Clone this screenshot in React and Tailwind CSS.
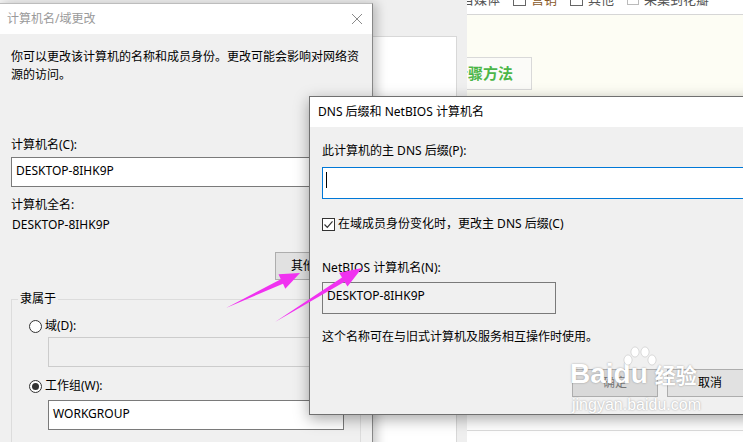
import React from 'react';

const ui = "font-['Noto_Sans','Noto_Sans_CJK_SC',sans-serif] text-[12px] leading-[18px] text-black";

function Radio({ checked, label }) {
  return (
    <div className="flex items-center h-[18px]">
      <span className="w-[13px] h-[13px] rounded-full border border-[#333] bg-white flex items-center justify-center">
        {checked && <span className="w-[7px] h-[7px] rounded-full bg-[#333]" />}
      </span>
      <span className="ml-[3px]">{label}</span>
    </div>
  );
}

function PageBehind() {
  // the web page that sits behind both dialogs
  return (
    <div className="absolute left-[467px] top-0 right-0 bottom-0 bg-white">
      <div className="h-[15px] border-b border-[#d6d6d6] overflow-hidden">
        <div className="-mt-[9px] -ml-[6px] flex items-center gap-[13px] text-[13px] leading-[16px] text-[#555] font-['Noto_Sans_CJK_SC',sans-serif] whitespace-nowrap">
          <span>自媒体</span>
          <span className="w-[13px] h-[13px] border border-[#666] bg-white" />
          <span className="-ml-[8px] text-[#8a5a2a]">营销</span>
          <span className="w-[13px] h-[13px] border border-[#666] bg-white" />
          <span className="-ml-[8px]">其他</span>
          <span className="w-[12px] h-[12px] border border-[#bbb] bg-white" />
          <span className="-ml-[8px]">采集到花瓣</span>
        </div>
      </div>
      <div className="h-[400px] bg-[#fdfdf4] pt-[42px]">
        <div className="-ml-[20px] w-[85px] h-[33px] border border-[#d9d9d9] bg-[#fbfbf8] flex items-center pl-[5px] text-[15px] font-bold text-[#4cb648] font-['Noto_Sans_CJK_SC',sans-serif] whitespace-nowrap">
          步骤方法
        </div>
      </div>
      <div className="h-[16px] border-b border-[#dcdcdc] bg-white" />
    </div>
  );
}

function BehindWindow() {
  return (
    <div className="absolute left-[300px] top-0 w-[167px] h-[442px] bg-[#efefef] pt-[36px]">
      <div className="w-[157px] h-[420px] bg-white border-r border-t border-[#d8d8d8]" />
    </div>
  );
}

function ComputerNameDialog() {
  return (
    <div className={`${ui} absolute -left-px top-[3px] w-[374px] h-[460px] bg-[#f0f0f0] border border-[#bdbdbd] border-r-[#888] shadow-[4px_0_10px_rgba(0,0,0,0.22)]`}>
      <div className="h-[30px] bg-white flex items-center justify-between pl-[7px] pr-[9px]">
        <span className="text-[#9a9a9a]">计算机名/域更改</span>
        <svg width="12" height="12" viewBox="0 0 12 12" className="text-[#8a8a8a]">
          <path d="M1 1 L11 11 M11 1 L1 11" stroke="currentColor" strokeWidth="1" fill="none" />
        </svg>
      </div>
      <div className="pl-[11px]">
        <p className="mt-[14px] w-[352px]">你可以更改该计算机的名称和成员身份。更改可能会影响对网络资源的访问。</p>
        <div className="mt-[52px]">计算机名(C):</div>
        <div className="mt-[3px] w-[350px] h-[30px] bg-white border border-[#7a7a7a] pl-[4px] pt-[4px]">DESKTOP-8IHK9P</div>
        <div className="mt-[9px]">计算机全名:</div>
        <div className="mt-[2px] ml-[1px]">DESKTOP-8IHK9P</div>
        <div className="mt-[18px] ml-[264px] w-[76px] h-[28px] bg-[#e1e1e1] border border-[#adadad] pl-[15px] flex items-center">其他(M)...</div>
        <div className="relative mt-[19px] w-[350px] h-[200px] border border-[#dcdcdc]">
          <span className="absolute -top-[10px] left-[6px] bg-[#f0f0f0] px-[2px]">隶属于</span>
          <div className="pl-[17px] pt-[17px]">
            <Radio label="域(D):" />
            <div className="mt-[2px] ml-[19px] w-[296px] h-[30px] bg-[#f0f0f0] border border-[#cccccc]" />
            <div className="mt-[10px]">
              <Radio checked label="工作组(W):" />
            </div>
            <div className="mt-[5px] ml-[19px] w-[296px] h-[30px] bg-white border border-[#7a7a7a] pl-[4px] pt-[4px]">WORKGROUP</div>
          </div>
        </div>
      </div>
    </div>
  );
}

function DnsDialog() {
  return (
    <div className={`${ui} absolute left-[309px] top-[96px] w-[450px] h-[319px] bg-[#f0f0f0] border border-[#707070] shadow-[0_4px_14px_rgba(0,0,0,0.35)]`}>
      <div className="h-[30px] bg-white flex items-center pl-[8px]">DNS 后缀和 NetBIOS 计算机名</div>
      <div className="pl-[12px]">
        <div className="mt-[15px]">此计算机的主 DNS 后缀(P):</div>
        <div className="mt-[7px] w-[440px] h-[32px] bg-white border border-[#0078d7] pl-[3px] pt-[4px]">
          <div className="w-px h-[16px] bg-black" />
        </div>
        <div className="mt-[16px] flex items-center h-[18px]">
          <span className="w-[13px] h-[13px] border border-[#333] bg-white flex items-center justify-center">
            <svg width="11" height="11" viewBox="0 0 11 11">
              <path d="M1.5 5.5 L4.3 8.3 L9.5 2.3" stroke="#333" strokeWidth="1.2" fill="none" />
            </svg>
          </span>
          <span className="ml-[3px]">在域成员身份变化时，更改主 DNS 后缀(C)</span>
        </div>
        <div className="mt-[26px]">NetBIOS 计算机名(N):</div>
        <div className="mt-[5px] w-[234px] h-[32px] bg-[#f0f0f0] border border-[#7a7a7a] pl-[4px] pt-[4px]">DESKTOP-8IHK9P</div>
        <div className="mt-[14px]">这个名称可在与旧式计算机及服务相互操作时使用。</div>
        <div className="mt-[23px] ml-[250px] flex gap-[9px]">
          <div className="w-[86px] h-[28px] bg-[#d9d9d9] border border-[#adadad] flex items-center justify-center text-[#777]">确定</div>
          <div className="w-[86px] h-[28px] bg-[#e1e1e1] border border-[#adadad] flex items-center justify-center">取消</div>
        </div>
      </div>
    </div>
  );
}

function Arrows() {
  return (
    <svg className="absolute left-0 top-0 pointer-events-none" width="743" height="442">
      <polygon fill="#f032f0" points="226,308 280.8,279.2 278.5,274.3 300,273 285.3,288.7 283,283.8" />
      <polygon fill="#f032f0" points="275,322 342,277.5 339.1,272.8 362,268 347.5,286.4 344.6,281.7" />
    </svg>
  );
}

function Watermark() {
  return (
    <div className="absolute left-[570px] top-[358px] pointer-events-none text-white [text-shadow:0_0_2px_rgba(0,0,0,0.35)] font-['Liberation_Sans',sans-serif]">
      <div className="flex items-end">
        <span className="text-[28px] font-bold leading-[32px]">Bai</span>
        <span className="relative text-[28px] font-bold leading-[32px]">
          du
          <svg className="absolute -top-[12px] left-[9px]" width="34" height="24" viewBox="0 0 34 24">
            <g fill="#ffffff" stroke="rgba(0,0,0,0.12)" strokeWidth="1">
              <ellipse cx="5" cy="14" rx="4" ry="5" />
              <ellipse cx="12" cy="6" rx="4" ry="5" />
              <ellipse cx="22" cy="6" rx="4" ry="5" />
              <ellipse cx="29" cy="14" rx="4" ry="5" />
            </g>
          </svg>
        </span>
        <span className="ml-[7px] text-[21px] font-bold leading-[32px] font-['Noto_Sans_CJK_SC',sans-serif]">经验</span>
      </div>
      <div className="text-[16px] leading-[20px] mt-[5px] ml-[2px]">jingyan.baidu.com</div>
    </div>
  );
}

export default function App() {
  return (
    <div className="relative w-[743px] h-[442px] overflow-hidden bg-[#f3f3f3]">
      <PageBehind />
      <BehindWindow />
      <ComputerNameDialog />
      <DnsDialog />
      <Arrows />
      <Watermark />
    </div>
  );
}
